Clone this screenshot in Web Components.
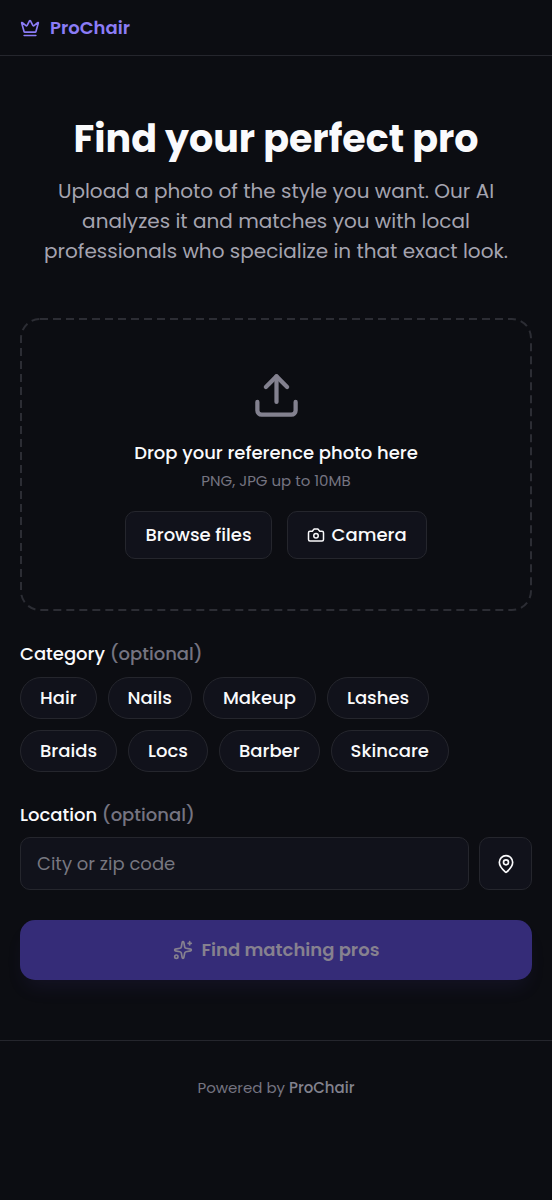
<!DOCTYPE html>
<html lang="en">
<head>
<meta charset="utf-8">
<meta name="viewport" content="width=device-width, initial-scale=1">
<title>ProChair</title>
<style>
  :root {
    --bg: #0c0d12;
    --surface: #11121b;
    --line: #25262d;
    --text: #fafafc;
    --soft: #a5a4b0;
    --muted: #757481;
    --brand: #8b7cf6;
  }
  html { background: var(--bg); }
  body {
    margin: 0;
    color: var(--text);
    font-family: Poppins, Inter, "Open Sans", sans-serif;
    font-size: 18px;
    line-height: 28px;
  }
</style>
</head>
<body>
<pro-page></pro-page>

<script>
const ICONS = {
  crown: '<path d="M11.562 3.266a.5.5 0 0 1 .876 0L15.39 8.87a1 1 0 0 0 1.516.294L21.183 5.5a.5.5 0 0 1 .798.519l-2.834 10.246a1 1 0 0 1-.956.734H5.81a1 1 0 0 1-.957-.734L2.02 6.02a.5.5 0 0 1 .798-.519l4.276 3.664a1 1 0 0 0 1.516-.294z"/><path d="M5 21h14"/>',
  upload: '<path d="M12 3v12"/><path d="m17 8-5-5-5 5"/><path d="M21 15v4a2 2 0 0 1-2 2H5a2 2 0 0 1-2-2v-4"/>',
  camera: '<path d="M14.5 4h-5L7 7H4a2 2 0 0 0-2 2v9a2 2 0 0 0 2 2h16a2 2 0 0 0 2-2V9a2 2 0 0 0-2-2h-3z"/><circle cx="12" cy="13" r="3"/>',
  pin: '<path d="M20 10c0 4.993-5.539 10.193-7.399 11.799a1 1 0 0 1-1.202 0C9.539 20.193 4 14.993 4 10a8 8 0 0 1 16 0"/><circle cx="12" cy="10" r="3"/>',
  sparkles: '<path d="M11.017 2.814a1 1 0 0 1 1.966 0l1.051 5.558a2 2 0 0 0 1.594 1.594l5.558 1.051a1 1 0 0 1 0 1.966l-5.558 1.051a2 2 0 0 0-1.594 1.594l-1.051 5.558a1 1 0 0 1-1.966 0l-1.051-5.558a2 2 0 0 0-1.594-1.594l-5.558-1.051a1 1 0 0 1 0-1.966l5.558-1.051a2 2 0 0 0 1.594-1.594z"/><path d="M20 2v4"/><path d="M22 4h-4"/><circle cx="4" cy="20" r="2"/>'
};

function define(name, html, setup) {
  customElements.define(name, class extends HTMLElement {
    connectedCallback() {
      if (this.shadowRoot) return;
      const root = this.attachShadow({ mode: 'open' });
      root.innerHTML = '<style>*{box-sizing:border-box}</style>' + html;
      if (setup) setup(this, root);
    }
  });
}

define('pro-icon', `
  <style>
    :host { display: block; width: 20px; height: 20px; flex: none; }
    svg { display: block; width: 100%; height: 100%; fill: none; stroke: currentColor; stroke-width: 2; stroke-linecap: round; stroke-linejoin: round; }
  </style>
  <svg viewBox="0 0 24 24" aria-hidden="true"></svg>`,
  (host, root) => { root.querySelector('svg').innerHTML = ICONS[host.getAttribute('name')]; });

define('pro-header', `
  <style>
    :host { display: block; border-bottom: 1px solid var(--line); padding: 14px 20px 13px; }
    a { display: inline-flex; align-items: center; gap: 10px; vertical-align: top; color: var(--brand); text-decoration: none; font-weight: 600; }
  </style>
  <a href="#"><pro-icon name="crown"></pro-icon><span><slot></slot></span></a>`);

define('pro-hero', `
  <style>
    :host { display: block; text-align: center; }
    h1 { margin: 0 0 12px; font-size: 38px; line-height: 50px; font-weight: 700; }
    p { margin: 0; color: var(--soft); font-size: 20px; line-height: 30px; }
  </style>
  <h1><slot name="title"></slot></h1>
  <p><slot></slot></p>`);

define('pro-button', `
  <style>
    :host { display: block; }
    button { display: flex; align-items: center; justify-content: center; gap: 7px; height: 48px; padding: 0 19px; border: 1px solid var(--line); border-radius: 10px; background: var(--surface); color: inherit; font: inherit; font-weight: 500; cursor: pointer; }
    ::slotted(pro-icon) { width: 18px; height: 18px; }
  </style>
  <button type="button"><slot name="icon"></slot><slot></slot></button>`);

define('pro-dropzone', `
  <style>
    :host { display: flex; flex-direction: column; align-items: center; position: relative; padding: 52px 20px; text-align: center; }
    .outline { position: absolute; top: 1px; left: 1px; width: calc(100% - 2px); height: calc(100% - 2px); overflow: visible; pointer-events: none; }
    rect { fill: none; stroke: #2c2d34; stroke-width: 2; stroke-dasharray: 8 5; }
    .art { width: 51px; height: 51px; color: #83818f; margin-bottom: 18px; }
    p { margin: 0; }
    .title { font-weight: 500; }
    .hint { font-size: 15px; color: var(--muted); }
    .actions { display: flex; gap: 15px; margin-top: 16px; }
  </style>
  <svg class="outline" aria-hidden="true"><rect width="100%" height="100%" rx="19"/></svg>
  <pro-icon class="art" name="upload"></pro-icon>
  <p class="title">Drop your reference photo here</p>
  <p class="hint">PNG, JPG up to 10MB</p>
  <div class="actions">
    <pro-button>Browse files</pro-button>
    <pro-button><pro-icon slot="icon" name="camera"></pro-icon>Camera</pro-button>
  </div>`);

define('pro-chip', `
  <style>
    :host { display: block; }
    button { display: block; height: 42px; padding: 0 19px; border: 1px solid var(--line); border-radius: 21px; background: var(--surface); color: inherit; font: inherit; font-weight: 500; cursor: pointer; }
  </style>
  <button type="button" aria-pressed="false"><slot></slot></button>`,
  (host, root) => {
    const b = root.querySelector('button');
    b.addEventListener('click', () => b.setAttribute('aria-pressed', b.getAttribute('aria-pressed') !== 'true'));
  });

define('pro-categories', `
  <style>
    :host { display: block; }
    fieldset { margin: 0; padding: 0; border: 0; min-width: 0; }
    legend { padding: 0; margin-bottom: 9px; font-weight: 500; }
    legend span { color: var(--muted); }
    .chips { display: flex; flex-wrap: wrap; gap: 11px; }
  </style>
  <fieldset>
    <legend>Category <span>(optional)</span></legend>
    <div class="chips"><slot></slot></div>
  </fieldset>`);

define('pro-location', `
  <style>
    :host { display: block; }
    label { display: block; margin-bottom: 8px; font-weight: 500; }
    label span { color: var(--muted); }
    .row { display: flex; gap: 10px; }
    input, button { height: 53px; margin: 0; border: 1px solid var(--line); border-radius: 10px; background: var(--surface); color: inherit; font: inherit; }
    input { flex: 1; min-width: 0; padding: 0 16px; }
    input::placeholder { color: #777780; opacity: 1; }
    button { display: grid; place-items: center; width: 53px; padding: 0; cursor: pointer; }
  </style>
  <label for="place">Location <span>(optional)</span></label>
  <div class="row">
    <input id="place" type="text" placeholder="City or zip code">
    <button type="button" aria-label="Use my location"><pro-icon name="pin"></pro-icon></button>
  </div>`);

define('pro-submit', `
  <style>
    :host { display: block; }
    button { display: flex; align-items: center; justify-content: center; gap: 9px; width: 100%; height: 60px; border: 0; border-radius: 15px; background: #352c78; color: #86818f; font: inherit; font-weight: 600; box-shadow: 0 12px 20px -6px rgba(80, 65, 190, .12); }
  </style>
  <button type="submit" disabled><pro-icon name="sparkles"></pro-icon><span><slot></slot></span></button>`);

define('pro-footer', `
  <style>
    :host { display: block; border-top: 1px solid var(--line); padding: 33px 20px; text-align: center; font-size: 15px; color: var(--muted); }
    a { color: #83828e; font-weight: 500; text-decoration: none; }
  </style>
  Powered by <a href="#">ProChair</a>`);

define('pro-page', `
  <style>
    :host { display: block; }
    main { max-width: 680px; margin: 0 auto; padding: 58px 20px 60px; }
    pro-dropzone { margin-top: 52px; }
    pro-categories { margin-top: 29px; }
    pro-location { margin-top: 29px; }
    pro-submit { margin-top: 30px; }
  </style>
  <header><pro-header>ProChair</pro-header></header>
  <main>
    <pro-hero><span slot="title">Find your perfect pro</span>Upload a photo of the style you want. Our AI analyzes it and matches you with local professionals who specialize in that exact look.</pro-hero>
    <pro-dropzone></pro-dropzone>
    <pro-categories>
      <pro-chip>Hair</pro-chip><pro-chip>Nails</pro-chip><pro-chip>Makeup</pro-chip><pro-chip>Lashes</pro-chip>
      <pro-chip>Braids</pro-chip><pro-chip>Locs</pro-chip><pro-chip>Barber</pro-chip><pro-chip>Skincare</pro-chip>
    </pro-categories>
    <pro-location></pro-location>
    <pro-submit>Find matching pros</pro-submit>
  </main>
  <footer><pro-footer></pro-footer></footer>`);
</script>
</body>
</html>
